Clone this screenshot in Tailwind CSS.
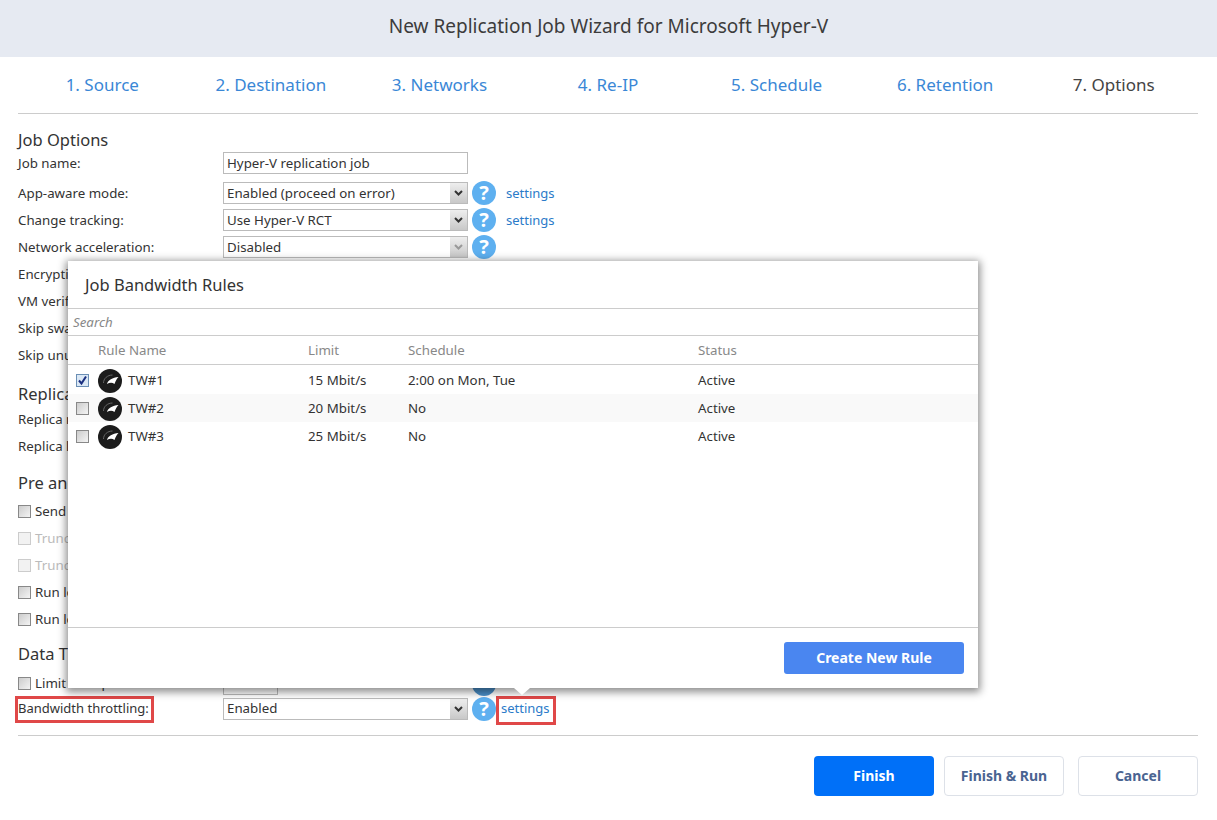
<!DOCTYPE html>
<html lang="en">
<head>
  <meta charset="UTF-8" />
  <meta name="viewport" content="width=device-width, initial-scale=1.0" />
  <title>New Replication Job Wizard for Microsoft Hyper-V</title>
  <script src="https://cdn.jsdelivr.net/npm/@tailwindcss/browser@4"></script>
</head>
<body class="bg-white text-[#333] font-['Noto_Sans',sans-serif] text-[13.3px]">
<div class="relative w-[1217px] h-[820px] overflow-hidden">

  <!-- Header -->
  <header class="h-[57px] bg-[#e6eaf2] flex items-center justify-center pb-[5px] text-[19px] text-[#3c3c3c]">New Replication Job Wizard for Microsoft Hyper-V</header>

  <!-- Steps -->
  <nav class="ml-[18px] mr-[19px] h-[57px] border-b border-[#ccc] relative text-[17px] text-[#3a87d6] grid grid-cols-7 text-center items-center">
    <a>1. Source</a>
    <a>2. Destination</a>
    <a>3. Networks</a>
    <a>4. Re-IP</a>
    <a>5. Schedule</a>
    <a>6. Retention</a>
    <a class="text-[#444]">7. Options</a>
  </nav>

  <!-- Form -->
  <main class="pl-[18px] pr-[19px] pt-[14px]">
    <h3 class="text-[16.500px] leading-[24px] h-[24px]">Job Options</h3>
    <div class="flex items-center h-[22px]">
      <span class="w-[205px] mt-[2px]">Job name:</span>
      <div class="w-[245px] h-[22px] border border-[#bbb] flex items-center pl-[3px]"><span class="mt-[2px]">Hyper-V replication job</span></div>
    </div>
    <div class="flex items-center h-[27px] mt-[5px]">
      <span class="w-[205px] mt-[2px]">App-aware mode:</span>
      <div class="w-[245px] h-[22px] border border-[#bbb] flex items-center justify-between pl-[3px]"><span class="mt-[2px]">Enabled (proceed on error)</span>
        <span class="w-[17px] h-full bg-gradient-to-b from-[#eee] to-[#c8c8c8] flex items-center justify-center"><svg width="9" height="6" viewBox="0 0 9 6"><path d="M1 1l3.500 3.500L8 1" fill="none" stroke="#333" stroke-width="2"/></svg></span>
      </div>
      <span class="ml-[4px] w-[24px] h-[24px] rounded-full bg-[#5eb0f0] text-white font-bold text-[20px] flex items-center justify-center">?</span>
      <a class="ml-[10px] mt-[2px] text-[13px] text-[#2b7bc9]">settings</a>
    </div>
    <div class="flex items-center h-[27px]">
      <span class="w-[205px] mt-[2px]">Change tracking:</span>
      <div class="w-[245px] h-[22px] border border-[#bbb] flex items-center justify-between pl-[3px]"><span class="mt-[2px]">Use Hyper-V RCT</span>
        <span class="w-[17px] h-full bg-gradient-to-b from-[#eee] to-[#c8c8c8] flex items-center justify-center"><svg width="9" height="6" viewBox="0 0 9 6"><path d="M1 1l3.500 3.500L8 1" fill="none" stroke="#333" stroke-width="2"/></svg></span>
      </div>
      <span class="ml-[4px] w-[24px] h-[24px] rounded-full bg-[#5eb0f0] text-white font-bold text-[20px] flex items-center justify-center">?</span>
      <a class="ml-[10px] mt-[2px] text-[13px] text-[#2b7bc9]">settings</a>
    </div>
    <div class="flex items-center h-[27px]">
      <span class="w-[205px] mt-[2px]">Network acceleration:</span>
      <div class="w-[245px] h-[22px] border border-[#bbb] flex items-center justify-between pl-[3px]"><span class="mt-[2px]">Disabled</span>
        <span class="w-[17px] h-full bg-gradient-to-b from-[#eee] to-[#c8c8c8] flex items-center justify-center"><svg width="9" height="6" viewBox="0 0 9 6"><path d="M1 1l3.500 3.500L8 1" fill="none" stroke="#999" stroke-width="2"/></svg></span>
      </div>
      <span class="ml-[4px] w-[24px] h-[24px] rounded-full bg-[#5eb0f0] text-white font-bold text-[20px] flex items-center justify-center">?</span>
    </div>
    <div class="flex items-center h-[27px] pt-[2px]">Encryption:</div>
    <div class="flex items-center h-[27px] pt-[2px]">VM verification:</div>
    <div class="flex items-center h-[27px] pt-[2px]">Skip swap files:</div>
    <div class="flex items-center h-[27px] pt-[2px]">Skip unused blocks:</div>

    <h3 class="text-[16.500px] leading-[24px] h-[24px] mt-[14px]">Replica Options</h3>
    <div class="flex items-center h-[27px]">Replica name:</div>
    <div class="flex items-center h-[27px]">Replica location:</div>

    <h3 class="text-[16.500px] leading-[24px] h-[24px] mt-[11px]">Pre and Post Job Actions</h3>
    <div class="flex items-center h-[27px] mt-[3px] gap-[4px]"><span class="w-[13px] h-[13px] border border-[#888] bg-gradient-to-br from-[#ccc] to-[#f4f4f4]"></span>Send job run reports</div>
    <div class="flex items-center h-[27px] gap-[4px] text-[#bbb]"><span class="w-[13px] h-[13px] border border-[#ccc] bg-[#f2f2f2]"></span>Truncate logs</div>
    <div class="flex items-center h-[27px] gap-[4px] text-[#bbb]"><span class="w-[13px] h-[13px] border border-[#ccc] bg-[#f2f2f2]"></span>Truncate logs</div>
    <div class="flex items-center h-[27px] gap-[4px]"><span class="w-[13px] h-[13px] border border-[#888] bg-gradient-to-br from-[#ccc] to-[#f4f4f4]"></span>Run local pre script</div>
    <div class="flex items-center h-[27px] gap-[4px]"><span class="w-[13px] h-[13px] border border-[#888] bg-gradient-to-br from-[#ccc] to-[#f4f4f4]"></span>Run local post script</div>

    <h3 class="text-[16.500px] leading-[24px] h-[24px] mt-[9px]">Data Transfer</h3>
    <div class="flex items-center h-[27px] mt-[4px]">
      <span class="w-[205px] flex items-center gap-[4px]"><span class="w-[13px] h-[13px] border border-[#888] bg-gradient-to-br from-[#ccc] to-[#f4f4f4]"></span>Limit transport</span>
      <div class="w-[55px] h-[22px] border border-[#bbb]"></div>
      <span class="ml-[194px] w-[24px] h-[24px] rounded-full bg-[#4a8fc8]"></span>
    </div>

    <!-- Bandwidth throttling -->
    <div class="flex items-center h-[25px] -mt-[1px]">
      <span class="w-[205px] relative text-[13px]"><span class="absolute -left-[3px] -top-[3px] w-[139px] h-[27px] border-[3px] border-[#e04848]"></span>Bandwidth throttling:</span>
      <div class="w-[245px] h-[22px] border border-[#bbb] flex items-center justify-between pl-[3px]">Enabled
        <span class="w-[17px] h-full bg-gradient-to-b from-[#eee] to-[#c8c8c8] flex items-center justify-center"><svg width="9" height="6" viewBox="0 0 9 6"><path d="M1 1l3.500 3.500L8 1" fill="none" stroke="#333" stroke-width="2"/></svg></span>
      </div>
      <span class="ml-[4px] w-[24px] h-[24px] rounded-full bg-[#5eb0f0] text-white font-bold text-[20px] flex items-center justify-center">?</span>
      <a class="ml-[5px] text-[13px] text-[#2b7bc9] relative">settings<span class="absolute -left-[5px] -top-[3px] w-[60px] h-[29px] border-[3px] border-[#e04848]"></span></a>
    </div>

    <div class="border-t border-[#ccc] mt-[14px]"></div>

    <!-- Footer buttons -->
    <div class="flex justify-end mt-[20px] font-bold text-[14px] text-[#4a6491]">
      <button class="w-[120px] h-[40px] pb-[2px] rounded-[4px] bg-[#0070f8] text-white">Finish</button>
      <button class="w-[120px] h-[40px] pb-[2px] rounded-[4px] border border-[#dde1e8] ml-[10px]">Finish &amp; Run</button>
      <button class="w-[120px] h-[40px] pb-[2px] rounded-[4px] border border-[#dde1e8] ml-[14px]">Cancel</button>
    </div>
  </main>

  <!-- Job Bandwidth Rules popover -->
  <section class="absolute left-[68px] top-[261px] w-[910px] h-[427px] bg-white shadow-[0_2px_8px_2px_rgba(0,0,0,0.45)] flex flex-col">
    <h3 class="h-[48px] flex items-center pl-[17px] text-[16.500px] border-b border-[#ccc] pt-[1px]">Job Bandwidth Rules</h3>
    <div class="h-[27px] flex items-center pl-[5px] pt-[2px] italic text-[#888] border-b border-[#ccc]">Search</div>
    <div class="h-[29px] grid grid-cols-[210px_100px_290px_1fr] items-center pl-[30px] pt-[2px] text-[#888] border-b border-[#ccc]">
      <span>Rule Name</span><span>Limit</span><span>Schedule</span><span>Status</span>
    </div>
    <div class="h-[28px] mt-[1px] grid grid-cols-[210px_100px_290px_1fr] items-center pl-[30px] pt-[1px] relative">
      <span class="flex items-center gap-[6px]"><span class="absolute left-[8px] w-[13px] h-[13px] border border-[#6b8fb5] bg-[#dbe8f5] flex items-center justify-center"><svg width="11" height="11" viewBox="0 0 11 11"><path d="M2 5.500l2.500 3L9 1.500" fill="none" stroke="#1a2f80" stroke-width="2"/></svg></span><svg width="24" height="24" viewBox="0 0 24 24"><circle cx="12" cy="12" r="12" fill="#1c1c1c"/><path d="M5.500 14C5.500 9.500 9.500 6 14.500 6" fill="none" stroke="#666" stroke-width="1"/><path d="M9 15C10 11 14.500 8.500 20.500 8C18.500 10 17.500 12 16.500 15C14 13 11.500 13.500 9 15Z" fill="#fff"/></svg>TW#1</span>
      <span>15 Mbit/s</span><span>2:00 on Mon, Tue</span><span>Active</span>
    </div>
    <div class="h-[28px] grid grid-cols-[210px_100px_290px_1fr] items-center pl-[30px] pt-[1px] relative bg-[#f9f9f9]">
      <span class="flex items-center gap-[6px]"><span class="absolute left-[8px] w-[13px] h-[13px] border border-[#888] bg-gradient-to-br from-[#ccc] to-[#f4f4f4]"></span><svg width="24" height="24" viewBox="0 0 24 24"><circle cx="12" cy="12" r="12" fill="#1c1c1c"/><path d="M5.500 14C5.500 9.500 9.500 6 14.500 6" fill="none" stroke="#666" stroke-width="1"/><path d="M9 15C10 11 14.500 8.500 20.500 8C18.500 10 17.500 12 16.500 15C14 13 11.500 13.500 9 15Z" fill="#fff"/></svg>TW#2</span>
      <span>20 Mbit/s</span><span>No</span><span>Active</span>
    </div>
    <div class="h-[28px] grid grid-cols-[210px_100px_290px_1fr] items-center pl-[30px] pt-[1px] relative">
      <span class="flex items-center gap-[6px]"><span class="absolute left-[8px] w-[13px] h-[13px] border border-[#888] bg-gradient-to-br from-[#ccc] to-[#f4f4f4]"></span><svg width="24" height="24" viewBox="0 0 24 24"><circle cx="12" cy="12" r="12" fill="#1c1c1c"/><path d="M5.500 14C5.500 9.500 9.500 6 14.500 6" fill="none" stroke="#666" stroke-width="1"/><path d="M9 15C10 11 14.500 8.500 20.500 8C18.500 10 17.500 12 16.500 15C14 13 11.500 13.500 9 15Z" fill="#fff"/></svg>TW#3</span>
      <span>25 Mbit/s</span><span>No</span><span>Active</span>
    </div>
    <div class="flex-1"></div>
    <div class="h-[61px] border-t border-[#ccc] flex justify-end items-start pt-[14px] pr-[14px]">
      <button class="w-[180px] h-[32px] pb-[2px] rounded-[3px] bg-[#4a86f0] text-white font-bold text-[14px]">Create New Rule</button>
    </div>
    <span class="absolute left-[446px] top-[427px] w-0 h-0 border-x-[8px] border-x-transparent border-t-[7px] border-t-white"></span>
  </section>
</div>
</body>
</html>
